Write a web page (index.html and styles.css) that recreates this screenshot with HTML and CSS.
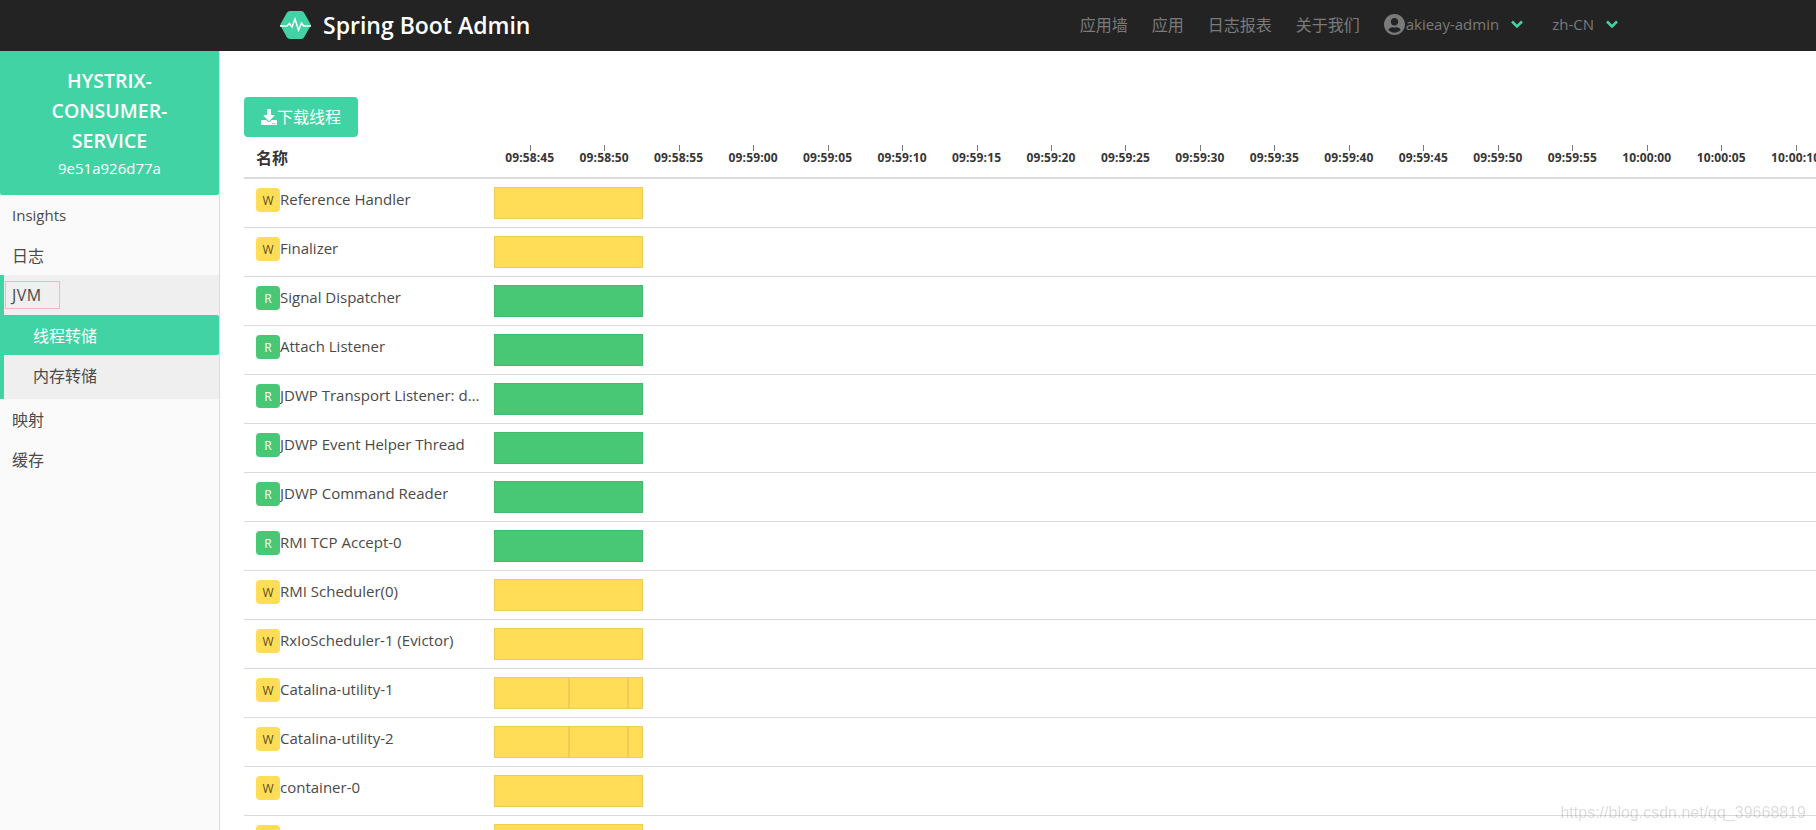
FILE: index.html
```html
<!DOCTYPE html>
<html lang="en">

<head>
    <meta charset="UTF-8">
    <meta name="viewport" content="width=device-width, initial-scale=1.0">
    <title>Spring Boot Admin</title>
    <link rel="stylesheet" href="styles.css">
</head>

<body>
    <div class="navbar">
        <div class="brand">
            <svg class="brand-logo" viewBox="0 0 31 28">
                <path d="M1 12.2 6.6 2.2C7.4.8 8.6 0 10.2 0h10.6c1.6 0 2.8.8 3.6 2.2L30 12.2c.9 1.5.9 2.2 0 3.6l-5.6 10C23.6 27.200 22.400 28 20.800 28H10.200c-1.600 0-2.800-.8-3.600-2.200L1 15.800c-.9-1.400-.9-2.100 0-3.600z" fill="#42d3a5" />
                <path d="M0 15h7l2.500-2.500 2.500 3.500 3-8 3.500 11 3-7 2 3h7.500" fill="none" stroke="#fff" stroke-width="1.500" />
            </svg>
            <span class="brand-name">Spring Boot Admin</span>
        </div>
        <div class="nav">
            <a href="#">应用墙</a>
            <a href="#">应用</a>
            <a href="#">日志报表</a>
            <a href="#">关于我们</a>
            <a href="#" class="nav-user">
                <svg class="avatar" viewBox="0 0 496 512">
                    <path d="M248 8C111 8 0 119 0 256s111 248 248 248 248-111 248-248S385 8 248 8zm0 96c48.600 0 88 39.400 88 88s-39.400 88-88 88-88-39.400-88-88 39.400-88 88-88zm0 344c-58.700 0-111.300-26.600-146.500-68.200 18.800-35.400 55.600-59.800 98.500-59.800 2.400 0 4.800.4 7.100 1.100 13 4.200 26.600 6.900 40.900 6.900 14.300 0 28-2.700 40.900-6.900 2.300-.7 4.700-1.100 7.100-1.100 42.900 0 79.700 24.400 98.500 59.800C359.300 421.400 306.700 448 248 448z" />
                </svg>
                <span class="nav-latin">akieay-admin</span>
                <svg class="chevron" viewBox="0 0 14 9"><path d="M2 1.500 7 6.500l5-5" /></svg>
            </a>
            <a href="#" class="nav-lang">
                <span class="nav-latin">zh-CN</span>
                <svg class="chevron" viewBox="0 0 14 9"><path d="M2 1.500 7 6.500l5-5" /></svg>
            </a>
        </div>
    </div>

    <div class="layout">
        <div class="sidebar">
            <div class="instance">
                <div class="instance-name">HYSTRIX-CONSUMER-SERVICE</div>
                <div class="instance-id">9e51a926d77a</div>
            </div>
            <a href="#" class="side-item latin">Insights</a>
            <a href="#" class="side-item">日志</a>
            <div class="side-group">
                <div class="side-head"><span class="side-focus">JVM</span></div>
                <a href="#" class="side-sub active">线程转储</a>
                <a href="#" class="side-sub">内存转储</a>
            </div>
            <a href="#" class="side-item">映射</a>
            <a href="#" class="side-item">缓存</a>
        </div>

        <div class="main">
            <button class="download">
                <svg class="download-icon" viewBox="0 0 512 512">
                    <path d="M216 0h80c13.300 0 24 10.700 24 24v168h87.700c17.800 0 26.700 21.500 14.100 34.100L269.700 378.300c-7.500 7.500-19.800 7.500-27.300 0L90.100 226.100c-12.600-12.600-3.700-34.100 14.100-34.100H192V24c0-13.300 10.700-24 24-24zm296 376v112c0 13.300-10.700 24-24 24H24c-13.300 0-24-10.700-24-24V376c0-13.300 10.700-24 24-24h146.700l49 49c20.100 20.100 52.500 20.100 72.600 0l49-49H488c13.300 0 24 10.700 24 24zm-124 88c0-11-9-20-20-20s-20 9-20 20 9 20 20 20 20-9 20-20zm64 0c0-11-9-20-20-20s-20 9-20 20 9 20 20 20 20-9 20-20z" />
                </svg><span class="download-label">下载线程</span>
            </button>

            <table class="threads">
                <thead>
                    <tr>
                        <th class="col-name">名称</th>
                        <th class="col-time">
                            <div class="axis">
                                <div class="tick">09:58:45</div>
                                <div class="tick">09:58:50</div>
                                <div class="tick">09:58:55</div>
                                <div class="tick">09:59:00</div>
                                <div class="tick">09:59:05</div>
                                <div class="tick">09:59:10</div>
                                <div class="tick">09:59:15</div>
                                <div class="tick">09:59:20</div>
                                <div class="tick">09:59:25</div>
                                <div class="tick">09:59:30</div>
                                <div class="tick">09:59:35</div>
                                <div class="tick">09:59:40</div>
                                <div class="tick">09:59:45</div>
                                <div class="tick">09:59:50</div>
                                <div class="tick">09:59:55</div>
                                <div class="tick">10:00:00</div>
                                <div class="tick">10:00:05</div>
                                <div class="tick">10:00:10</div>
                            </div>
                        </th>
                    </tr>
                </thead>
                <tbody>
                    <tr>
                        <td><div class="thread"><span class="badge waiting">W</span><span class="thread-name">Reference Handler</span></div></td>
                        <td><div class="bar"><div class="seg waiting"></div></div></td>
                    </tr>
                    <tr>
                        <td><div class="thread"><span class="badge waiting">W</span><span class="thread-name">Finalizer</span></div></td>
                        <td><div class="bar"><div class="seg waiting"></div></div></td>
                    </tr>
                    <tr>
                        <td><div class="thread"><span class="badge running">R</span><span class="thread-name">Signal Dispatcher</span></div></td>
                        <td><div class="bar"><div class="seg running"></div></div></td>
                    </tr>
                    <tr>
                        <td><div class="thread"><span class="badge running">R</span><span class="thread-name">Attach Listener</span></div></td>
                        <td><div class="bar"><div class="seg running"></div></div></td>
                    </tr>
                    <tr>
                        <td><div class="thread"><span class="badge running">R</span><span class="thread-name">JDWP Transport Listener: dt_socket</span></div></td>
                        <td><div class="bar"><div class="seg running"></div></div></td>
                    </tr>
                    <tr>
                        <td><div class="thread"><span class="badge running">R</span><span class="thread-name">JDWP Event Helper Thread</span></div></td>
                        <td><div class="bar"><div class="seg running"></div></div></td>
                    </tr>
                    <tr>
                        <td><div class="thread"><span class="badge running">R</span><span class="thread-name">JDWP Command Reader</span></div></td>
                        <td><div class="bar"><div class="seg running"></div></div></td>
                    </tr>
                    <tr>
                        <td><div class="thread"><span class="badge running">R</span><span class="thread-name">RMI TCP Accept-0</span></div></td>
                        <td><div class="bar"><div class="seg running"></div></div></td>
                    </tr>
                    <tr>
                        <td><div class="thread"><span class="badge waiting">W</span><span class="thread-name">RMI Scheduler(0)</span></div></td>
                        <td><div class="bar"><div class="seg waiting"></div></div></td>
                    </tr>
                    <tr>
                        <td><div class="thread"><span class="badge waiting">W</span><span class="thread-name">RxIoScheduler-1 (Evictor)</span></div></td>
                        <td><div class="bar"><div class="seg waiting"></div></div></td>
                    </tr>
                    <tr>
                        <td><div class="thread"><span class="badge waiting">W</span><span class="thread-name">Catalina-utility-1</span></div></td>
                        <td><div class="bar"><div class="seg waiting" style="width: 75px"></div><div class="seg waiting" style="width: 59px"></div><div class="seg waiting" style="width: 15px"></div></div></td>
                    </tr>
                    <tr>
                        <td><div class="thread"><span class="badge waiting">W</span><span class="thread-name">Catalina-utility-2</span></div></td>
                        <td><div class="bar"><div class="seg waiting" style="width: 75px"></div><div class="seg waiting" style="width: 59px"></div><div class="seg waiting" style="width: 15px"></div></div></td>
                    </tr>
                    <tr>
                        <td><div class="thread"><span class="badge waiting">W</span><span class="thread-name">container-0</span></div></td>
                        <td><div class="bar"><div class="seg waiting"></div></div></td>
                    </tr>
                    <tr>
                        <td><div class="thread"><span class="badge waiting">W</span><span class="thread-name">container-1</span></div></td>
                        <td><div class="bar"><div class="seg waiting"></div></div></td>
                    </tr>
                </tbody>
            </table>
        </div>
    </div>

    <div class="watermark">https://blog.csdn.net/qq_39668819</div>
</body>

</html>
```

FILE: styles.css
```css
html,
body {
    height: 100%;
}

body {
    font-family: 'Open Sans', 'Noto Sans CJK SC', sans-serif;
    font-size: 14px;
    color: #4a4a4a;
    background: #fff;
    margin: 0;
    overflow: hidden;
    display: flex;
    flex-direction: column;
    position: relative;
}

a {
    text-decoration: none;
    color: inherit;
}

.navbar {
    height: 51px;
    flex: none;
    background: #232323;
    display: flex;
    align-items: center;
    justify-content: space-between;
    padding: 0 197px 0 280px;
}

.brand {
    display: flex;
    align-items: center;
    color: #fff;
    font-size: 23px;
    font-weight: 600;
}

.brand-logo {
    width: 31px;
    height: 28px;
    margin-right: 12px;
    margin-top: -2px;
}

.brand-name {
    margin-top: -2px;
}

.nav {
    display: flex;
    align-items: center;
    color: #7a7a7a;
    font-size: 16px;
    margin-top: -3px;
}

.nav a {
    margin-left: 24px;
    display: flex;
    align-items: center;
}

.nav-latin {
    font-size: 15px;
}

.avatar {
    width: 21px;
    height: 23px;
    fill: #7a7a7a;
}

.nav-user span {
    margin-left: 1px;
}

.nav .nav-lang {
    margin-left: 28px;
}

.chevron {
    width: 14px;
    height: 9px;
    margin-left: 11px;
    fill: none;
    stroke: #42d3a5;
    stroke-width: 2.500;
}

.layout {
    flex: 1;
    display: flex;
    min-height: 0;
}

.sidebar {
    width: 219px;
    flex: none;
    background: #fafafa;
    border-right: 1px solid #dbdbdb;
    font-size: 16px;
}

.instance {
    background: #42d3a5;
    color: #fff;
    text-align: center;
    padding: 15px 20px 15px;
    height: 144px;
    box-sizing: border-box;
    border-radius: 0 0 2px 2px;
}

.instance-name {
    font-size: 19.500px;
    font-weight: 600;
    line-height: 30px;
}

.instance-id {
    font-size: 15px;
    line-height: 24px;
}

.side-item,
.side-head,
.side-sub {
    display: flex;
    align-items: center;
    height: 40px;
}

.side-item {
    padding-left: 12px;
}

.side-item.latin {
    font-size: 15px;
}

.side-group {
    background: #efefef;
    border-left: 4px solid #42d3a5;
    padding-bottom: 4px;
}

.side-focus {
    border: 1px solid #f7b3cb;
    width: 55px;
    height: 28px;
    margin-left: 1px;
    padding-left: 6px;
    box-sizing: border-box;
    display: flex;
    align-items: center;
    font-size: 16px;
    letter-spacing: 0.5px;
}

.side-sub {
    padding-left: 29px;
}

.side-sub.active {
    background: #42d3a5;
    color: #fff;
    margin-left: -4px;
    padding-left: 33px;
    border-radius: 0 2px 2px 0;
}

.main {
    flex: 1;
    min-width: 0;
    padding: 46px 0 0 24px;
    overflow: hidden;
}

.download {
    display: flex;
    align-items: center;
    height: 40px;
    width: 114px;
    padding: 0 0 0 17px;
    background: #42d3a5;
    color: #fff;
    border: none;
    border-radius: 4px;
    font-family: inherit;
    font-size: 16px;
}

.download-icon {
    width: 16px;
    height: 16px;
    fill: #fff;
}

.download-label {
    margin-top: -2px;
}

.threads {
    border-collapse: collapse;
    table-layout: fixed;
    width: 100%;
}

.threads th {
    height: 40px;
    padding: 0;
    border-bottom: 2px solid #dbdbdb;
    text-align: left;
    color: #363636;
}

.col-name {
    width: 226px;
    font-size: 16px;
}

.threads th.col-name {
    padding-left: 12px;
}

.threads th.col-time {
    vertical-align: top;
}

.axis {
    display: flex;
    padding-left: 10.500px;
    margin-top: 8px;
}

.tick {
    flex: none;
    width: 74.470px;
    text-align: center;
    font-size: 12px;
    font-weight: 700;
    letter-spacing: 0.15px;
    white-space: nowrap;
    line-height: 14px;
    position: relative;
    padding-top: 6px;
}

.tick::before {
    content: "";
    position: absolute;
    top: 0;
    left: 50%;
    width: 1px;
    height: 6px;
    background: #777;
}

.threads td {
    padding: 8px 0 8px 12px;
    border-bottom: 1px solid #dbdbdb;
}

.thread {
    display: flex;
    align-items: flex-start;
    height: 32px;
    font-size: 15px;
}

.thread-name {
    min-width: 0;
    white-space: nowrap;
    overflow: hidden;
    text-overflow: ellipsis;
    line-height: 24px;
}

.badge {
    flex: none;
    width: 24px;
    height: 24px;
    margin-top: 1px;
    border-radius: 4px;
    display: flex;
    align-items: center;
    justify-content: center;
    font-size: 12px;
}

.badge.waiting {
    background: #ffdd57;
    color: rgba(0, 0, 0, 0.7);
}

.badge.running {
    background: #48c774;
    color: #fff;
}

.bar {
    display: flex;
    width: 149px;
    height: 32px;
}

.seg {
    flex: 1 1 auto;
    box-sizing: border-box;
}

.seg.waiting {
    background: #ffdd57;
    border: 1px solid #eccd55;
}

.seg.running {
    background: #48c774;
    border: 1px solid #44bb6d;
}

.watermark {
    position: absolute;
    right: 10px;
    bottom: 8px;
    font-family: 'Liberation Sans', sans-serif;
    font-size: 16px;
    color: rgba(0, 0, 0, 0.14);
    filter: blur(0.5px);
}
```
